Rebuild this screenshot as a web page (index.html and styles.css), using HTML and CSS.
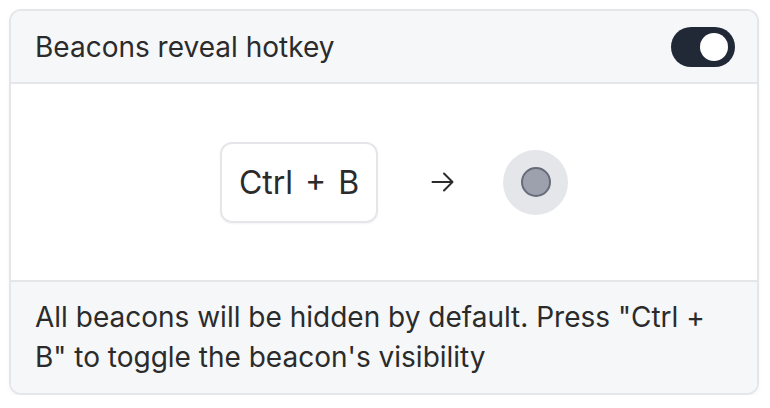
FILE: index.html
```html
<!DOCTYPE html>
<html>
<head>
<meta charset="utf-8">
<link rel="stylesheet" href="styles.css">
</head>
<body>
<div class="card">
  <div class="card-header">
    <span class="title">Beacons reveal hotkey</span>
    <span class="toggle"><span class="knob"></span></span>
  </div>
  <div class="card-body">
    <div class="key">Ctrl + B</div>
    <svg class="arrow" width="23" height="20" viewBox="0 0 23 20" fill="none" stroke="#2b2b2b" stroke-width="2" stroke-linecap="round" stroke-linejoin="round">
      <path d="M1.5 10H21.5M13 1.5L21.5 10L13 18.5"/>
    </svg>
    <div class="beacon"><span class="dot"></span></div>
  </div>
  <div class="card-footer">All beacons will be hidden by default. Press "Ctrl + B" to toggle the beacon's visibility</div>
</div>
</body>
</html>
```
FILE: styles.css
```css
html, body { margin: 0; padding: 0; background: #ffffff; }
body {
  font-family: Inter, "Noto Sans", sans-serif;
  color: #2b2b2b;
  padding: 9px 11px 0 9px;
}
.card {
  border: 2px solid #e5e6ea;
  border-radius: 12px;
  overflow: hidden;
  box-shadow: 0 2px 4px rgba(0,0,0,0.04);
}
.card-header {
  display: flex;
  align-items: center;
  justify-content: space-between;
  height: 71px;
  padding: 0 22px 0 24px;
  background: #f6f7f9;
  border-bottom: 2px solid #e5e6ea;
}
.title { font-size: 28px; }
.toggle {
  width: 64px; height: 40px;
  border-radius: 20px;
  background: #212937;
  display: flex; align-items: center; justify-content: flex-end;
  padding: 0 7px; box-sizing: border-box;
}
.knob { width: 28px; height: 28px; border-radius: 50%; background: #fff; }
.card-body {
  height: 196px;
  background: #fff;
  display: flex; align-items: center; justify-content: center;
  padding-left: 20px;
}
.key {
  box-sizing: border-box;
  border: 2px solid #e5e6ea;
  border-radius: 12px;
  padding: 0 17px;
  height: 81px;
  display: flex; align-items: center;
  font-size: 32px;
  word-spacing: 3px;
  box-shadow: 0 1px 2px rgba(0,0,0,0.05);
  margin-right: 53px;
  margin-top: 1px;
}
.beacon {
  width: 65px; height: 65px; border-radius: 50%;
  background: #e5e6ea;
  display: flex; align-items: center; justify-content: center;
  margin-left: 49px;
}
.dot {
  width: 26px; height: 26px; border-radius: 50%;
  background: #9ca1ad; border: 2.5px solid #656b78;
}
.card-footer {
  background: #f6f7f9;
  border-top: 2px solid #e5e6ea;
  padding: 15px 24px 16px;
  font-size: 28px;
  line-height: 40px;
}
```
